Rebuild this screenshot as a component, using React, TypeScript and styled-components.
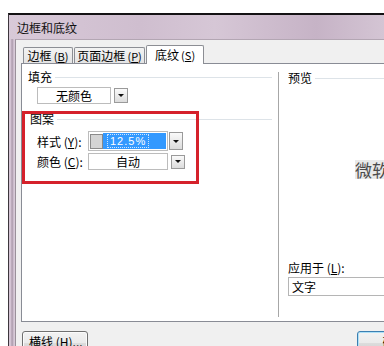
import React from 'react';
import styled, {createGlobalStyle} from 'styled-components';

const GlobalStyle = createGlobalStyle`
    html, body {
        margin: 0;
        background: #fff;
        overflow: hidden;
    }
    body {
        width: 384px;
        height: 346px;
        font-family: "Liberation Sans", "Noto Sans CJK SC", sans-serif;
        font-size: 12px;
        color: #000;
    }
`

const Window = styled.div`
    margin: 13px 0 0 8px;
    width: 376px;
    height: 333px;
    box-sizing: border-box;
    overflow: hidden;
    border-top: 2px solid #141214;
    border-left: 1px solid #3d363d;
    display: flex;
    flex-direction: column;
    background: linear-gradient(to right, #d4c4d4 0, #d4c4d4 2px, #a292a2 3px, #c6b5c6 4px, #ddd1dd 6px);
`

const TitleBar = styled.div`
    height: 24px;
    flex-shrink: 0;
    display: flex;
    align-items: center;
    padding-left: 8px;
    background: linear-gradient(to right, #d8c9d8 0%, #cfbecf 35%, #d6c7d6 55%, #c6b3c6 82%, #d4c5d4 100%);
    font-family: "Noto Sans CJK SC", sans-serif;
    font-size: 12px;
    color: #111;
`

const Client = styled.div`
    flex: 1;
    margin-left: 6px;
    border-left: 1px solid #9a909a;
    border-top: 1px solid #b3a6b3;
    background: #f0f0f0;
    padding-left: 5px;
    display: flex;
    flex-direction: column;
`

const TabStrip = styled.div`
    height: 23px;
    display: flex;
    align-items: flex-end;
    padding-left: 2px;
`

const Tab = styled.div<{ $active?: boolean; $w: number }>`
    width: ${p => p.$w}px;
    box-sizing: border-box;
    height: ${p => (p.$active ? 19 : 16)}px;
    margin-bottom: ${p => (p.$active ? -1 : 0)}px;
    margin-right: ${p => (p.$active ? 0 : 1)}px;
    position: relative;
    z-index: ${p => (p.$active ? 2 : 0)};
    border: 1px solid #8c8e94;
    border-bottom: none;
    border-radius: 2px 2px 0 0;
    background: ${p => (p.$active ? '#fff' : 'linear-gradient(#f3f3f3, #e4e4e4)')};
    display: flex;
    align-items: ${p => (p.$active ? 'flex-start' : 'center')};
    padding-top: ${p => (p.$active ? 2 : 0)}px;
    justify-content: center;
    font-family: "Noto Sans CJK SC", sans-serif;
    font-size: 12px;
    line-height: 14px;
    white-space: pre;

    small {
        font-size: 11px;
    }
`

const Panel = styled.div`
    width: 380px;
    height: 259px;
    box-sizing: border-box;
    border: 1px solid #898c95;
    background: #fff;
    display: flex;
    flex-shrink: 0;
`

const LeftCol = styled.div`
    width: 256px;
    flex-shrink: 0;
    position: relative;
    padding-top: 6px;
    display: flex;
    flex-direction: column;
`

const Divider = styled.div`
    width: 1px;
    margin-top: 8px;
    height: 245px;
    background: #a7a7a7;
    border-right: 1px solid #fff;
    flex-shrink: 0;
`

const RightCol = styled.div`
    flex: 1;
    padding: 7px 0 0 8px;
    display: flex;
    flex-direction: column;
`

const GroupHeader = styled.div<{ $left: number; $top?: number }>`
    height: 14px;
    display: flex;
    align-items: center;
    margin-left: ${p => p.$left}px;
    margin-top: ${p => p.$top ?? 0}px;
    margin-right: 6px;
    font-family: "Noto Sans CJK SC", sans-serif;
    font-size: 12px;
    line-height: 14px;
    white-space: nowrap;

    &::after {
        content: '';
        flex: 1;
        margin-left: 3px;
        border-top: 1px solid #dde3e8;
    }
`

const FieldRow = styled.div<{ $top: number }>`
    display: flex;
    align-items: center;
    margin-top: ${p => p.$top}px;
    margin-left: 15px;
`

const FieldLabel = styled.div`
    width: 51px;
    font-family: "Noto Sans CJK SC", sans-serif;
    font-size: 12px;
    white-space: pre;
`

const ComboBox = styled.div<{ $w: number; $h: number }>`
    width: ${p => p.$w}px;
    height: ${p => p.$h}px;
    box-sizing: border-box;
    border: 1px solid #bcbcbc;
    background: #fff;
    display: flex;
    align-items: center;
    justify-content: center;
    font-family: "Noto Sans CJK SC", sans-serif;
    font-size: 12px;
    padding: 1px;
`

const DropButton = styled.div<{ $h: number; $gap: number }>`
    width: 14px;
    height: ${p => p.$h}px;
    margin-left: ${p => p.$gap}px;
    box-sizing: border-box;
    border: 1px solid #9a9a9a;
    background: linear-gradient(#fafafa, #dcdcdc);
    display: flex;
    align-items: center;
    justify-content: center;

    &::before {
        content: '';
        border-left: 3px solid transparent;
        border-right: 3px solid transparent;
        border-top: 3px solid #111;
    }
`

const Swatch = styled.div`
    width: 13px;
    height: 15px;
    box-sizing: border-box;
    border: 1px solid #8a8a8a;
    background: #d4d4d4;
    flex-shrink: 0;
`

const Selected = styled.div`
    flex: 1;
    align-self: stretch;
    background: #3399ff;
    color: #fff;
    display: flex;
    align-items: center;
    padding-left: 5px;

    span {
        outline: 1px dotted #cfe6ff;
        font-family: "Liberation Sans", sans-serif;
        font-size: 11px;
        letter-spacing: 1px;
        line-height: 12px;
        padding: 0 2px;
    }
`

const RedFrame = styled.div`
    position: absolute;
    left: 0;
    top: 47px;
    width: 177px;
    height: 73px;
    box-sizing: border-box;
    border: 3px solid #d5212b;
    pointer-events: none;
`

const PreviewBox = styled.div`
    height: 168px;
    display: flex;
    align-items: center;
    padding-left: 67px;
`

const PreviewText = styled.span`
    font-family: "Noto Sans CJK SC", sans-serif;
    font-size: 17px;
    line-height: 19px;
    color: #4b4b4b;
    background: #e9e9e9;
    white-space: nowrap;
`

const ApplyLabel = styled.div`
    margin-top: 8px;
    height: 14px;
    line-height: 14px;
    font-family: "Noto Sans CJK SC", sans-serif;
    font-size: 12px;
    white-space: pre;
`

const ApplyBox = styled.div`
    margin-top: 2px;
    height: 19px;
    box-sizing: border-box;
    border: 1px solid #b5b5b5;
    padding-left: 3px;
    display: flex;
    align-items: center;
    font-family: "Noto Sans CJK SC", sans-serif;
    font-size: 12px;
`

const ButtonRow = styled.div`
    display: flex;
    margin-top: 9px;
    padding-left: 1px;
    gap: 269px;
`

const Button = styled.div<{ $default?: boolean }>`
    width: ${p => (p.$default ? 75 : 66)}px;
    height: 23px;
    flex-shrink: 0;
    box-sizing: border-box;
    border: 1px solid ${p => (p.$default ? '#3c7fb1' : '#707070')};
    border-radius: 3px;
    box-shadow: inset 0 0 0 1px ${p => (p.$default ? '#aee0f7' : '#fbfbfb')};
    background: linear-gradient(#f2f2f2 0%, #ebebeb 50%, #dddddd 51%, #cfcfcf 100%);
    display: flex;
    align-items: flex-start;
    padding-top: 3px;
    justify-content: ${p => (p.$default ? 'center' : 'flex-start')};
    padding-left: ${p => (p.$default ? 0 : 6)}px;
    font-family: "Noto Sans CJK SC", sans-serif;
    font-size: 12px;
    line-height: 14px;
    white-space: pre;
`

const Key = styled.span`
    text-decoration: underline;
`

export default function App() {
    return (
        <>
            <GlobalStyle/>
            <Window>
                <TitleBar>边框和底纹</TitleBar>
                <Client>
                    <TabStrip>
                        <Tab $w={50}>边框<small>{'\u2009'}(<Key>B</Key>)</small></Tab>
                        <Tab $w={71}>页面边框<small>{'\u2009'}(<Key>P</Key>)</small></Tab>
                        <Tab $w={58} $active>底纹<small>{'\u2009'}(<Key>S</Key>)</small></Tab>
                    </TabStrip>
                    <Panel>
                        <LeftCol>
                            <GroupHeader $left={6}>填充</GroupHeader>
                            <FieldRow $top={3}>
                                <ComboBox $w={74} $h={17}>无颜色</ComboBox>
                                <DropButton $h={15} $gap={3}/>
                            </FieldRow>
                            <GroupHeader $left={8} $top={8}>图案</GroupHeader>
                            <FieldRow $top={5}>
                                <FieldLabel>样式 (<Key>Y</Key>):</FieldLabel>
                                <ComboBox $w={80} $h={20}>
                                    <Swatch/>
                                    <Selected><span>12.5%</span></Selected>
                                </ComboBox>
                                <DropButton $h={18} $gap={1}/>
                            </FieldRow>
                            <FieldRow $top={2}>
                                <FieldLabel>颜色 (<Key>C</Key>):</FieldLabel>
                                <ComboBox $w={80} $h={17}>自动</ComboBox>
                                <DropButton $h={14} $gap={3}/>
                            </FieldRow>
                            <RedFrame/>
                        </LeftCol>
                        <Divider/>
                        <RightCol>
                            <GroupHeader $left={0}>预览</GroupHeader>
                            <PreviewBox>
                                <PreviewText>微软</PreviewText>
                            </PreviewBox>
                            <ApplyLabel>应用于 (<Key>L</Key>):</ApplyLabel>
                            <ApplyBox>文字</ApplyBox>
                        </RightCol>
                    </Panel>
                    <ButtonRow>
                        <Button>横线 (<Key>H</Key>)...</Button>
                        <Button $default>确定</Button>
                    </ButtonRow>
                </Client>
            </Window>
        </>
    );
}
